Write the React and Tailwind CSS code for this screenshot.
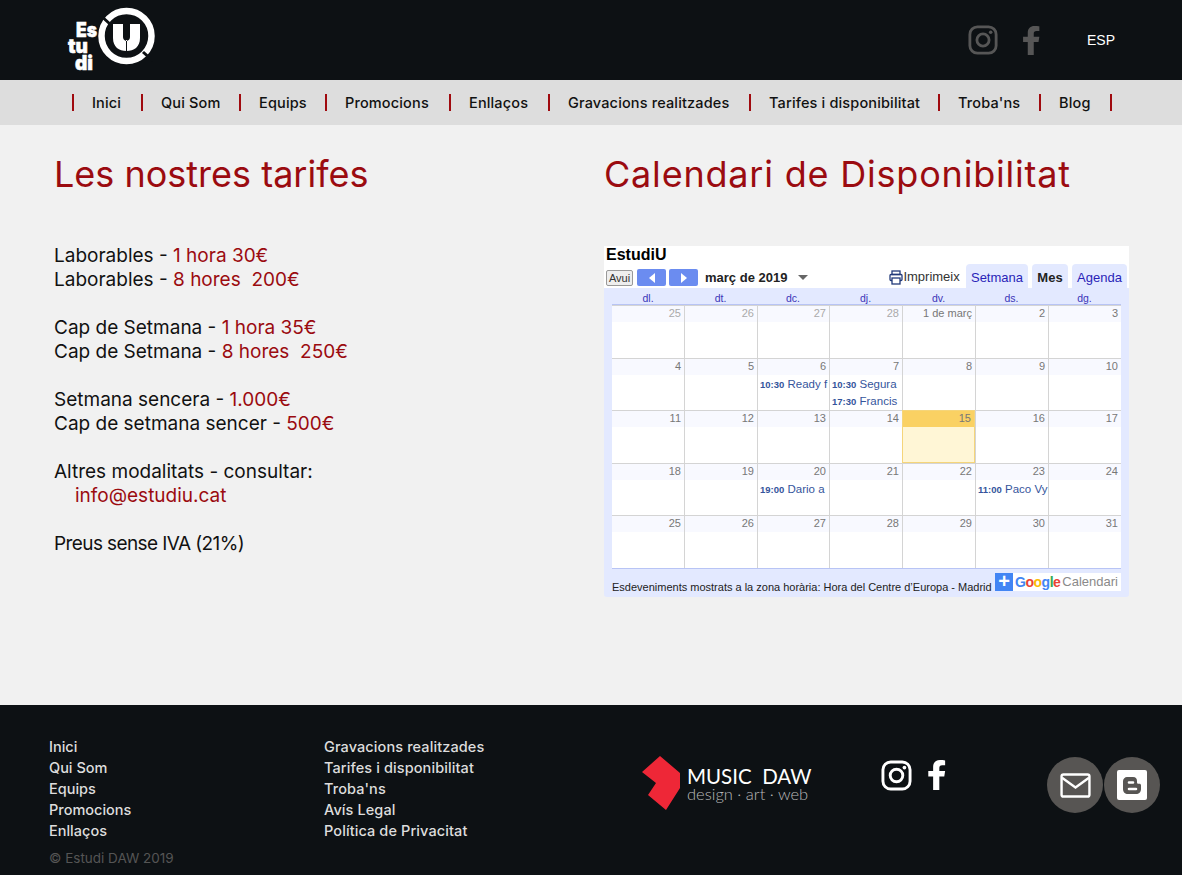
import React from "react";

const poppins = "font-['Inter','Noto_Sans',sans-serif]";
const calendarCols = "grid grid-cols-[72px_73px_72px_73px_73px_73px_73px]";

const navItems = [
  { label: "Inici", width: "w-[69px]" },
  { label: "Qui Som", width: "w-[98px]" },
  { label: "Equips", width: "w-[86px]" },
  { label: "Promocions", width: "w-[124px]" },
  { label: "Enllaços", width: "w-[99px]" },
  { label: "Gravacions realitzades", width: "w-[201px]" },
  { label: "Tarifes i disponibilitat", width: "w-[189px]" },
  { label: "Troba'ns", width: "w-[101px]" },
  { label: "Blog", width: "w-[71px]" },
];

const footerLeft = ["Inici", "Qui Som", "Equips", "Promocions", "Enllaços"];
const footerRight = [
  "Gravacions realitzades",
  "Tarifes i disponibilitat",
  "Troba'ns",
  "Avís Legal",
  "Política de Privacitat",
];

const weekDays = ["dl.", "dt.", "dc.", "dj.", "dv.", "ds.", "dg."];

const calendarWeeks = [
  {
    height: "h-[53px]",
    days: [
      { n: "25", off: true },
      { n: "26", off: true },
      { n: "27", off: true },
      { n: "28", off: true },
      { n: "1 de març" },
      { n: "2" },
      { n: "3" },
    ],
  },
  {
    height: "h-[52px]",
    days: [
      { n: "4" },
      { n: "5" },
      { n: "6", events: [["10:30", "Ready f"]] },
      {
        n: "7",
        events: [
          ["10:30", "Segura"],
          ["17:30", "Francis"],
        ],
      },
      { n: "8" },
      { n: "9" },
      { n: "10" },
    ],
  },
  {
    height: "h-[53px]",
    days: [
      { n: "11" },
      { n: "12" },
      { n: "13" },
      { n: "14" },
      { n: "15", today: true },
      { n: "16" },
      { n: "17" },
    ],
  },
  {
    height: "h-[52px]",
    days: [
      { n: "18" },
      { n: "19" },
      { n: "20", events: [["19:00", "Dario a"]] },
      { n: "21" },
      { n: "22" },
      { n: "23", events: [["11:00", "Paco Vy"]] },
      { n: "24" },
    ],
  },
  {
    height: "h-[53px]",
    days: [
      { n: "25" },
      { n: "26" },
      { n: "27" },
      { n: "28" },
      { n: "29" },
      { n: "30" },
      { n: "31" },
    ],
  },
];

function InstagramIcon({ className }) {
  return (
    <svg viewBox="0 0 32 32" className={className} fill="none" stroke="currentColor">
      <rect x="2" y="2" width="28" height="28" rx="8" strokeWidth="3" />
      <circle cx="16" cy="16" r="6.5" strokeWidth="3" />
      <circle cx="24.2" cy="7.8" r="1.9" fill="currentColor" stroke="none" />
    </svg>
  );
}

function FacebookIcon({ className }) {
  return (
    <svg viewBox="0 0 18 31" className={className} fill="currentColor">
      <path d="M5 31V17H0v-5.6h5V7.2C5 2.4 8 0 12 0c2 0 4 .2 5.4.4v5h-3c-2.300 0-3 1.100-3 2.900v3.100h6l-.9 5.600h-5.100v14z" />
    </svg>
  );
}

function Logo() {
  return (
    <svg viewBox="0 0 100 70" className="w-[100px] h-[70px]">
      <circle cx="70.500" cy="31" r="25" fill="none" stroke="#fff" strokeWidth="6.500" />
      <path d="M44 10l10 9M87 47l10 9" stroke="#0d1114" strokeWidth="3" />
      <path
        d="M57 19h10v13c0 2 1 3 3 4v-1h1v1c2-1 3-2 3-4V19h10v14c0 9-6 13-13.500 13S57 42 57 33z"
        fill="#fff"
      />
      <path d="M70 36h1v10h-1z" fill="#0d1114" />
      <g fill="#fff" fontFamily="Inter,sans-serif" fontWeight="900" stroke="#fff" strokeWidth=".5" fontSize="20">
        <text x="20" y="32" textLength="21" lengthAdjust="spacingAndGlyphs">Es</text>
        <text x="12" y="48" textLength="20" lengthAdjust="spacingAndGlyphs">tu</text>
        <text x="19" y="65" textLength="18" lengthAdjust="spacingAndGlyphs">di</text>
      </g>
    </svg>
  );
}

function MusicDawLogo() {
  return (
    <div className="flex items-center">
      <svg viewBox="0 0 40 56" className="w-[40px] h-[56px]">
        <path d="M19 1l20 17v15L25 55 7 40l8-12L1 17z" fill="#ee2737" />
      </svg>
      <div className="ml-[6px] font-['Lato',sans-serif] text-white">
        <div className="text-[20.500px] leading-[23px] whitespace-pre">MUSIC  DAW</div>
        <div className="text-[16.500px] leading-[13px] font-light text-[#b9b9b9] whitespace-pre">design · art · web</div>
      </div>
    </div>
  );
}

function GoogleBadge() {
  return (
    <div className="flex h-[18px] bg-white items-center font-['Liberation_Sans',sans-serif]">
      <div className="w-[18px] h-[18px] bg-[#4285f4] text-white text-[20px] leading-[17px] font-bold text-center">+</div>
      <div className="ml-[2px] text-[14px] font-bold tracking-[-0.5px]">
        <span className="text-[#4285f4]">G</span>
        <span className="text-[#ea4335]">o</span>
        <span className="text-[#fbbc05]">o</span>
        <span className="text-[#4285f4]">g</span>
        <span className="text-[#34a853]">l</span>
        <span className="text-[#ea4335]">e</span>
      </div>
      <div className="ml-[2px] pr-[3px] text-[13px] text-[#8a8a8a]">Calendari</div>
    </div>
  );
}

function Tab({ label, active, width }) {
  return (
    <div
      className={`${width} h-[24px] bg-[#e3e9ff] rounded-t-[4px] text-[13px] leading-[15px] text-center pt-[6px] ${
        active ? "font-bold text-[#222]" : "text-[#2a1fb8]"
      }`}
    >
      {label}
    </div>
  );
}

function DayCell({ day, height }) {
  return (
    <div className={`${height} min-w-0 border-t border-l border-[#d4d4d4] first:border-l-0 overflow-hidden ${day.today ? "bg-[#fff6d6] border-b border-r border-[#f5d57a]" : ""}`}>
      <div
        className={`h-[16px] px-[3px] text-right text-[11px] leading-[15px] ${
          day.today ? "bg-[#fad163] text-[#555]" : "bg-[#f8f9ff]"
        } ${day.off ? "text-[#aaa]" : "text-[#777]"}`}
      >
        {day.n}
      </div>
      {day.events?.map(([time, title]) => (
        <div key={time} className="h-[17px] pl-[2px] pt-[2px] text-[11.500px] leading-[15px] text-[#35559c] whitespace-nowrap overflow-hidden">
          <span className="font-bold text-[9.500px]">{time}</span> {title}
        </div>
      ))}
    </div>
  );
}

function Calendar() {
  return (
    <div className="w-[525px] font-['Liberation_Sans',sans-serif]">
      <div className="bg-white h-[42px] relative">
        <div className="pl-[2px] text-[16px] leading-[18px] font-bold text-black">EstudiU</div>
        <div className="flex items-center pl-[2px] mt-[4px]">
          <div className="w-[27px] h-[16px] border border-[#999] rounded-[2px] bg-[#eee] text-[11px] leading-[14px] text-center text-[#333]">Avui</div>
          <div className="ml-[4px] w-[29px] h-[17px] rounded-[2px] bg-[#6b8cf0] flex items-center justify-center">
            <div className="w-0 h-0 border-y-[5px] border-y-transparent border-r-[6px] border-r-white" />
          </div>
          <div className="ml-[3px] w-[29px] h-[17px] rounded-[2px] bg-[#6b8cf0] flex items-center justify-center">
            <div className="w-0 h-0 border-y-[5px] border-y-transparent border-l-[6px] border-l-white" />
          </div>
          <div className="ml-[7px] text-[13px] font-bold text-[#222]">març de 2019</div>
          <div className="ml-[11px] w-0 h-0 border-x-[5px] border-x-transparent border-t-[5px] border-t-[#666]" />
          <svg viewBox="0 0 14 15" className="ml-[81px] w-[14px] h-[15px]" fill="none" stroke="#223a7a" strokeWidth="1.300">
            <rect x="3" y="1" width="8" height="3.500" />
            <rect x="1" y="4.500" width="12" height="6" rx="1" />
            <rect x="3" y="8" width="8" height="6" fill="#fff" />
          </svg>
          <div className="text-[13px] leading-[15px] pb-[2px] text-[#333]">Imprimeix</div>
        </div>
        <div className="absolute right-[2px] bottom-0 flex gap-[4px]">
          <Tab label="Setmana" width="w-[62px]" />
          <Tab label="Mes" active width="w-[36px]" />
          <Tab label="Agenda" width="w-[55px]" />
        </div>
      </div>
      <div className="h-[309px] bg-[#e3e9ff] rounded-b-[3px] px-[8px]">
        <div className={`${calendarCols} h-[17px] border-b border-[#b8c4f5]`}>
          {weekDays.map((d) => (
            <div key={d} className="text-center text-[10.500px] leading-[20px] text-[#3b35b8]">{d}</div>
          ))}
        </div>
        <div className="border-b border-[#b8c4f5] bg-white">
          {calendarWeeks.map((week) => (
            <div key={week.days[0].n + week.height} className={calendarCols}>
              {week.days.map((day) => (
                <DayCell key={day.n} day={day} height={week.height} />
              ))}
            </div>
          ))}
        </div>
        <div className="flex items-end justify-between mt-[4px]">
          <div className="text-[11px] leading-[14px] -mb-[3px] text-[#222] whitespace-nowrap">
            Esdeveniments mostrats a la zona horària: Hora del Centre d’Europa - Madrid
          </div>
          <GoogleBadge />
        </div>
      </div>
    </div>
  );
}

function PriceLine({ label, value }) {
  return (
    <div className="whitespace-pre">
      {label}
      {value && <span className="text-[#9b0b10]"> {value}</span>}
    </div>
  );
}

function App() {
  return (
    <div className={`w-[1182px] h-[875px] flex flex-col overflow-hidden bg-[#f1f1f1] ${poppins}`}>
      <header className="h-[80px] bg-[#0d1114] flex items-center pl-[56px]">
        <Logo />
        <div className="ml-auto flex items-center text-[#565656]">
          <InstagramIcon className="w-[30px] h-[30px]" />
          <FacebookIcon className="ml-[25px] w-[17px] h-[29px]" />
          <div className="ml-[47px] mr-[66px] w-[29px] font-['Liberation_Sans',sans-serif] text-[14px] text-white">ESP</div>
        </div>
      </header>

      <nav className="h-[45px] bg-[#dddddd] flex items-center pl-[72px]">
        {navItems.map((item) => (
          <div key={item.label} className={`${item.width} h-[17px] border-l-2 border-[#a00a0f] pl-[18px] text-[14.500px] leading-[17px] font-medium text-[#111] whitespace-nowrap tracking-[0.15px]`}>
            {item.label}
          </div>
        ))}
        <div className="h-[17px] border-l-2 border-[#a00a0f]" />
      </nav>

      <main className="flex-1 flex pl-[54px]">
        <section className="w-[550px] pt-[25px]">
          <h1 className="text-[36px] leading-[48px] text-[#9b0b10]">Les nostres tarifes</h1>
          <div className="mt-[46px] text-[19px] leading-[24px] text-[#111]">
            <PriceLine label="Laborables -" value="1 hora 30€" />
            <PriceLine label="Laborables -" value="8 hores  200€" />
            <div className="h-[24px]" />
            <PriceLine label="Cap de Setmana -" value="1 hora 35€" />
            <PriceLine label="Cap de Setmana -" value="8 hores  250€" />
            <div className="h-[24px]" />
            <PriceLine label="Setmana sencera -" value="1.000€" />
            <PriceLine label="Cap de setmana sencer -" value="500€" />
            <div className="h-[24px]" />
            <PriceLine label="Altres modalitats - consultar:" />
            <div className="pl-[21px] text-[#9b0b10]">info@estudiu.cat</div>
            <div className="h-[24px]" />
            <div className="tracking-[-0.6px]">
              <PriceLine label="Preus sense IVA (21%)" />
            </div>
          </div>
        </section>
        <section className="pt-[25px]">
          <h1 className="text-[36px] leading-[48px] tracking-[0.8px] text-[#9b0b10] whitespace-nowrap">Calendari de Disponibilitat</h1>
          <div className="mt-[48px]">
            <Calendar />
          </div>
        </section>
      </main>

      <footer className="h-[170px] bg-[#0d1114] flex pl-[49px]">
        <div className="w-[275px] pt-[31px] text-[14.500px] leading-[21px] font-medium text-[#dddddd]">
          {footerLeft.map((l) => (
            <div key={l}>{l}</div>
          ))}
          <div className="mt-[7px] text-[13.500px] font-normal text-[#555]">© Estudi DAW 2019</div>
        </div>
        <div className="w-[317px] pt-[31px] text-[14.500px] leading-[21px] font-medium text-[#dddddd] tracking-[0.1px]">
          {footerRight.map((l) => (
            <div key={l}>{l}</div>
          ))}
        </div>
        <div className="w-[240px] pt-[50px]">
          <MusicDawLogo />
        </div>
        <div className="flex pt-[55px] text-white">
          <InstagramIcon className="w-[31px] h-[31px]" />
          <FacebookIcon className="ml-[16px] w-[18px] h-[30px]" />
        </div>
        <div className="flex pt-[52px] ml-[101px] gap-[1px]">
          <div className="w-[56px] h-[56px] rounded-full bg-[#575553] flex items-center justify-center">
            <svg viewBox="0 0 32 26" className="w-[31px] h-[25px]" fill="none" stroke="#fff" strokeWidth="2.500">
              <rect x="1.500" y="1.500" width="29" height="23" rx="2" />
              <path d="M2 5l14 10L30 5" />
            </svg>
          </div>
          <div className="w-[56px] h-[56px] rounded-full bg-[#575553] flex items-center justify-center">
            <svg viewBox="0 0 30 30" className="w-[30px] h-[30px]">
              <rect width="30" height="30" rx="2" fill="#fff" />
              <path d="M10 7h6c3 0 4 2 4 4v1.500c0 .8.700 1.300 1.500 1.300h1c.8 0 1.500.700 1.500 1.500V19c0 3-2 5-5 5h-8c-3 0-5-2-5-5v-8c0-2 2-4 4-4z" fill="#575553" />
              <path d="M12 12.500h4M12 19h7" stroke="#fff" strokeWidth="2.600" strokeLinecap="round" />
            </svg>
          </div>
        </div>
      </footer>
    </div>
  );
}

export default App;
